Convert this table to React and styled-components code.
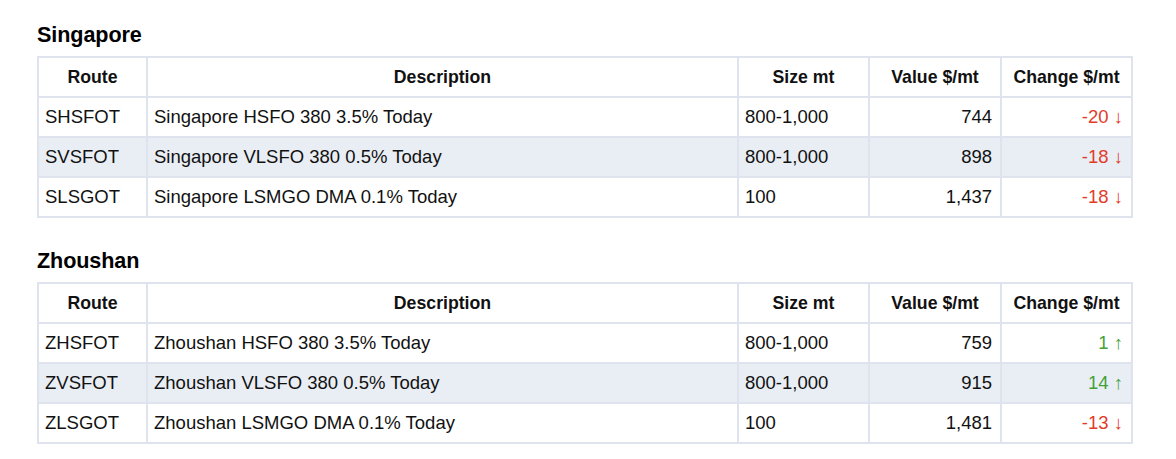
import styled, { createGlobalStyle } from 'styled-components';

const GlobalStyle = createGlobalStyle`
  body {
    margin: 0;
    background: #fff;
    font-family: "Liberation Sans", Arial, sans-serif;
    color: #111;
  }
`;

const sections = [
  {
    title: 'Singapore',
    rows: [
      { route: 'SHSFOT', desc: 'Singapore HSFO 380 3.5% Today', size: '800-1,000', value: '744', change: -20 },
      { route: 'SVSFOT', desc: 'Singapore VLSFO 380 0.5% Today', size: '800-1,000', value: '898', change: -18 },
      { route: 'SLSGOT', desc: 'Singapore LSMGO DMA 0.1% Today', size: '100', value: '1,437', change: -18 },
    ],
  },
  {
    title: 'Zhoushan',
    rows: [
      { route: 'ZHSFOT', desc: 'Zhoushan HSFO 380 3.5% Today', size: '800-1,000', value: '759', change: 1 },
      { route: 'ZVSFOT', desc: 'Zhoushan VLSFO 380 0.5% Today', size: '800-1,000', value: '915', change: 14 },
      { route: 'ZLSGOT', desc: 'Zhoushan LSMGO DMA 0.1% Today', size: '100', value: '1,481', change: -13 },
    ],
  },
];

function PriceTable({ title, rows }) {
  return (
    <Section>
      <Heading>{title}</Heading>
      <Table>
        <colgroup>
          <col style={{ width: 109 }} />
          <col style={{ width: 591 }} />
          <col style={{ width: 131 }} />
          <col style={{ width: 132 }} />
          <col style={{ width: 131 }} />
        </colgroup>
        <thead>
          <tr>
            <Th>Route</Th>
            <Th>Description</Th>
            <Th>Size mt</Th>
            <Th>Value $/mt</Th>
            <Th>Change $/mt</Th>
          </tr>
        </thead>
        <tbody>
          {rows.map((r) => (
            <Row key={r.route}>
              <Td>{r.route}</Td>
              <Td>{r.desc}</Td>
              <Td>{r.size}</Td>
              <Td $right>{r.value}</Td>
              <Td $right>
                <Change $up={r.change > 0}>
                  {r.change} {r.change > 0 ? '↑' : '↓'}
                </Change>
              </Td>
            </Row>
          ))}
        </tbody>
      </Table>
    </Section>
  );
}

export default function App() {
  return (
    <>
      <GlobalStyle />
      <Page>
        {sections.map((s) => (
          <PriceTable key={s.title} title={s.title} rows={s.rows} />
        ))}
      </Page>
    </>
  );
}

const Page = styled.div`
  padding: 21px 0 0 37px;
  width: 1094px;
  display: flex;
  flex-direction: column;
  gap: 29px;
`;

const Section = styled.section`
  display: flex;
  flex-direction: column;
`;

const Heading = styled.h2`
  margin: 0 0 7px;
  font-size: 21.6px;
  line-height: 28px;
  font-weight: 700;
  color: #000;
  letter-spacing: -0.1px;
`;

const Table = styled.table`
  width: 1094px;
  border-collapse: collapse;
  table-layout: fixed;
  border: 2px solid #dfe3ee;
  font-size: 18.5px;
`;

const Th = styled.th`
  height: 38px;
  padding: 0 8px;
  border: 2px solid #dfe3ee;
  font-size: 17.7px;
  font-weight: 700;
  text-align: center;
  color: #111;
`;

const Row = styled.tr`
  &:nth-child(even) {
    background: #e9eef5;
  }
`;

const Td = styled.td`
  height: 38px;
  padding: 0 8px 0 6px;
  border: 2px solid #dfe3ee;
  text-align: ${(p) => (p.$right ? 'right' : 'left')};
  color: #111;
`;

const Change = styled.span`
  color: ${(p) => (p.$up ? '#45a136' : '#e23b27')};
`;
